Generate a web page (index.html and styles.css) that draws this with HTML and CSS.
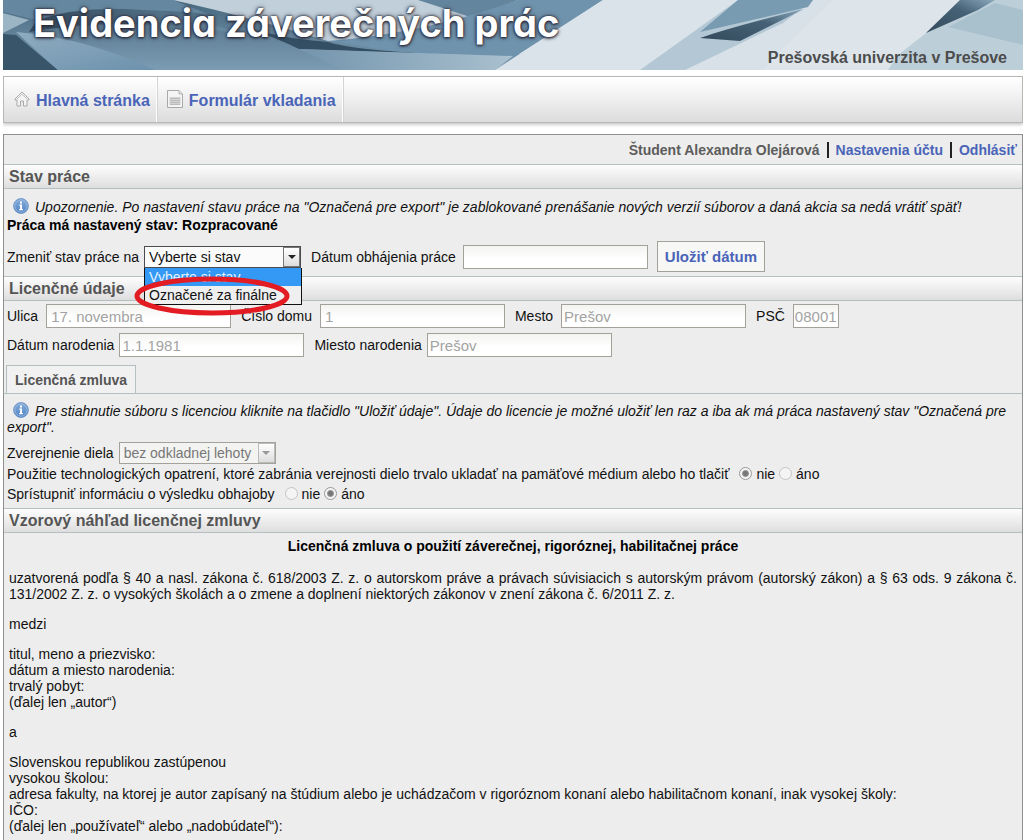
FILE: index.html
```html
<!DOCTYPE html>
<html lang="sk">
<head>
<meta charset="utf-8">
<title>Evidencia záverečných prác</title>
<link rel="stylesheet" href="styles.css">
</head>
<body>
<svg class="defs" width="0" height="0" aria-hidden="true">
  <defs>
    <linearGradient id="info-fill" x1="0" y1="0" x2="0" y2="1"><stop offset="0" stop-color="#86acd9"/><stop offset="1" stop-color="#5185c6"/></linearGradient>
    <symbol id="info" viewBox="0 0 16 16">
      <circle cx="8" cy="8" r="7.4" fill="url(#info-fill)" stroke="#5b87bd" stroke-width=".8"/>
      <circle cx="8" cy="8" r="6.2" fill="none" stroke="#a8c4e6" stroke-width=".7"/>
      <path d="M7 3.4h2v2H7zM6.2 6.4H9v4.6h.9v1.2H6.2V11h.9V7.600h-.9z" fill="#fff"/>
    </symbol>
  </defs>
</svg>
<header class="banner">
  <svg class="banner-art" viewBox="0 0 1020 70" preserveAspectRatio="none" aria-hidden="true">
    <defs>
      <linearGradient id="g1" x1="0" y1="0" x2="0" y2="1"><stop offset="0" stop-color="#47697f"/><stop offset="1" stop-color="#7c9cb4"/></linearGradient>
      <linearGradient id="g2" x1="0" y1="0" x2="1" y2="1"><stop offset="0" stop-color="#8facc0"/><stop offset="1" stop-color="#6d92ad"/></linearGradient>
      <linearGradient id="g3" x1="0" y1="0" x2="1" y2="0"><stop offset="0" stop-color="#31485a"/><stop offset=".5" stop-color="#4d6c82"/><stop offset="1" stop-color="#7194ab"/></linearGradient>
      <linearGradient id="g4" x1="0" y1="0" x2="1" y2="0"><stop offset="0" stop-color="#7495ad"/><stop offset="1" stop-color="#a9c0cf"/></linearGradient>
      <linearGradient id="g5" x1="0" y1="1" x2="1" y2="0"><stop offset="0" stop-color="#334a5b"/><stop offset=".6" stop-color="#466176"/><stop offset="1" stop-color="#8aa8bb"/></linearGradient>
    </defs>
    <rect width="1020" height="70" fill="#d8e1e8"/>
    <path d="M0 0H180L330 40L520 54L495 70H0Z" fill="url(#g1)"/>
    <path d="M0 0H34L170 0L205 14Q110 4 34 20L0 12Z" fill="#6588a0"/>
    <path d="M34 20Q90 2 165 13L250 36Q130 14 26 32Z" fill="url(#g3)"/>
    <path d="M0 13L26 20L0 33Z" fill="#9bb5c5"/>
    <path d="M0 34L13 35L55 70H0Z" fill="#38556a"/>
    <path d="M13 32Q80 37 152 70H55Z" fill="url(#g2)"/>
    <path d="M170 0H432L487 0L440 38Q380 44 325 41Q250 18 170 0Z" fill="#c0cfd9"/>
    <path d="M415 0H515L470 18Q440 8 415 0Z" fill="#63859d"/>
    <path d="M325 41Q420 34 515 0H600L510 58L495 66Q420 56 325 41Z" fill="#6f93ad"/>
    <path d="M220 20Q270 38 325 42Q350 50 432 54L296 49Q265 34 220 20Z" fill="#344f63"/>
    <path d="M296 49L510 56L492 70H340Z" fill="url(#g4)"/>
    <path d="M600 0L492 70H650L755 0Z" fill="#dae3e9"/>
    <path d="M735 0L637 70H682L780 23L810 0Z" fill="#b3c7d4"/>
    <path d="M735 0L697 32L805 7L810 0Z" fill="#799bb2"/>
    <path d="M697 38Q725 28 801 9L737 41Z" fill="url(#g5)"/>
    <path d="M830 0L780 48L760 70H905L960 0Z" fill="#dde5eb"/>
    <path d="M957 0L923 33L895 55L885 70H1020V0Z" fill="#bccfd9"/>
    <path d="M957 0L923 33L975 10L992 0Z" fill="url(#g5)"/>
    <path d="M992 3L1020 10V45L945 27Z" fill="#a9c1cd"/>
  </svg>
  <h1 class="banner-title">Evidencia záverečných prác</h1>
  <p class="banner-school">Prešovská univerzita v Prešove</p>
</header>

<nav class="menu">
  <a class="menu-item" href="#"><svg class="menu-icon" viewBox="0 0 16 16" aria-hidden="true"><path d="M1 8L8 1L15 8V9H13V15H9.500V10H6.500V15H3V9H1Z" fill="#f4f4f4" stroke="#a9a9a9"/><path d="M3 8L8 3.200L13 8" fill="none" stroke="#c4c4c4"/></svg>Hlavná stránka</a>
  <a class="menu-item" href="#"><svg class="menu-icon form-icon" viewBox="0 0 16 18" aria-hidden="true"><path d="M.5 .5H12L15.500 4V17.500H.5Z" fill="#f4f4f4" stroke="#a9a9a9"/><path d="M12 .5V4H15.500" fill="#ddd" stroke="#b5b5b5"/><path d="M2.500 7H13.500V15H2.500Z" fill="#d2d2d2"/><path d="M3 8.500H13M3 10.500H13M3 12.500H13M3 14.500H13" stroke="#bdbdbd"/></svg>Formulár vkladania</a>
</nav>

<main class="panel">
  <div class="user"><span class="user-name">Študent Alexandra Olejárová</span><span class="bar"></span><a href="#">Nastavenia účtu</a><span class="bar"></span><a href="#">Odhlásiť</a></div>

  <h2 class="section">Stav práce</h2>
  <div class="block">
    <p class="note"><svg class="info" aria-hidden="true"><use href="#info"/></svg>Upozornenie. Po nastavení stavu práce na "Označená pre export" je zablokované prenášanie nových verzií súborov a daná akcia sa nedá vrátiť späť!</p>
    <p class="state">Práca má nastavený stav: Rozpracované</p>
    <form class="row state-row">
      <label for="state">Zmeniť stav práce na</label>
      <span class="pick">
        <select class="select" id="state"><option>Vyberte si stav</option><option>Označené za finálne</option></select>
        <span class="arrow"></span>
        <span class="drop"><span class="opt opt-on">Vyberte si stav</span><span class="opt">Označené za finálne</span></span>
        <svg class="ring" viewBox="0 0 156 42" aria-hidden="true"><ellipse cx="78" cy="21" rx="75" ry="17" fill="none" stroke="#e31b23" stroke-width="5"/></svg>
      </span>
      <label class="next" for="defence">Dátum obhájenia práce</label>
      <input class="field defence" id="defence" type="text">
      <button class="save" type="button">Uložiť dátum</button>
    </form>
  </div>

  <h2 class="section">Licenčné údaje</h2>
  <form class="address">
    <div class="row street-row">
      <label for="street">Ulica</label><input class="field" id="street" value="17. novembra" disabled>
      <label class="next" for="house">Číslo domu</label><input class="field" id="house" value="1" disabled>
      <label class="next" for="city">Mesto</label><input class="field tight" id="city" value="Prešov" disabled>
      <label class="next" for="zip">PSČ</label><input class="field zip" id="zip" value="08001" disabled>
    </div>
    <div class="row">
      <label for="born">Dátum narodenia</label><input class="field tight" id="born" value="1.1.1981" disabled>
      <label class="next" for="place">Miesto narodenia</label><input class="field tight" id="place" value="Prešov" disabled>
    </div>
  </form>
  <div class="tabs"><button class="tab" type="button">Licenčná zmluva</button></div>
  <form class="licence">
    <p class="note"><svg class="info" aria-hidden="true"><use href="#info"/></svg>Pre stiahnutie súboru s licenciou kliknite na tlačidlo "Uložiť údaje". Údaje do licencie je možné uložiť len raz a iba ak má práca nastavený stav "Označená pre export".</p>
    <div class="row publish">
      <label for="publish">Zverejnenie diela</label>
      <span class="pick pick-off"><select class="select" id="publish" disabled><option>bez odkladnej lehoty</option></select><span class="arrow"></span></span>
    </div>
    <div class="choice"><span class="ask">Použitie technologických opatrení, ktoré zabránia verejnosti dielo trvalo ukladať na pamäťové médium alebo ho tlačiť</span>
      <label class="opt-label"><input class="radio" type="radio" name="tech" checked disabled>nie</label><label class="opt-label"><input class="radio" type="radio" name="tech" disabled>áno</label></div>
    <div class="choice"><span class="ask">Sprístupniť informáciu o výsledku obhajoby</span>
      <label class="opt-label"><input class="radio" type="radio" name="result" disabled>nie</label><label class="opt-label"><input class="radio" type="radio" name="result" checked disabled>áno</label></div>
  </form>

  <h2 class="section">Vzorový náhľad licenčnej zmluvy</h2>
  <article class="contract">
    <h3>Licenčná zmluva o použití záverečnej, rigoróznej, habilitačnej práce</h3>
    <p class="intro">uzatvorená podľa § 40 a nasl. zákona č. 618/2003 Z. z. o autorskom práve a právach súvisiacich s autorským právom (autorský zákon) a § 63 ods. 9 zákona č. 131/2002 Z. z. o vysokých školách a o zmene a doplnení niektorých zákonov v znení zákona č. 6/2011 Z. z.</p>
    <p>medzi</p>
    <p>titul, meno a priezvisko:<br>dátum a miesto narodenia:<br>trvalý pobyt:<br>(ďalej len „autor“)</p>
    <p>a</p>
    <p>Slovenskou republikou zastúpenou<br>vysokou školou:<br>adresa fakulty, na ktorej je autor zapísaný na štúdium alebo je uchádzačom v rigoróznom konaní alebo habilitačnom konaní, inak vysokej školy:<br>IČO:<br>(ďalej len „používateľ“ alebo „nadobúdateľ“):</p>
  </article>
</main>
</body>
</html>
```

FILE: styles.css
```css
* { box-sizing: border-box; }
body {
  margin: 0 1px 0 3px;
  background: #fff;
  color: #111;
  font: 14px/16px "Liberation Sans", Arial, sans-serif;
}
h1, h2, h3, p { margin: 0; }
a { color: #4a64b8; text-decoration: none; }
button, input, select { font: inherit; }
.defs { position: absolute; }

.banner {
  position: relative;
  display: flex;
  justify-content: space-between;
  align-items: flex-start;
  height: 70px;
  padding: 0 16px 0 30px;
}
.banner-art { position: absolute; inset: 0; width: 100%; height: 100%; }
.banner-title {
  position: relative;
  color: #fff;
  font: bold 38px/46px Inter, "Open Sans", sans-serif;
  font-feature-settings: "cv11";
  text-shadow: 0 0 2px #223, 0 1px 3px #223, 0 0 5px #445;
  white-space: nowrap;
}
.banner-school {
  position: relative;
  align-self: flex-end;
  padding-bottom: 3px;
  color: #4c4c4c;
  font-size: 16px;
  font-weight: bold;
  line-height: 18px;
}

.menu {
  display: flex;
  height: 47px;
  margin-top: 6px;
  border: 1px solid #b9b7b2;
  background: linear-gradient(#fff, #f2f2f2 40%, #dcdcdc);
  box-shadow: 0 2px 3px #ccc;
}
.menu-item {
  display: flex;
  align-items: center;
  gap: 6px;
  padding: 2px 6px 0 10px;
  border-right: 1px solid #fff;
  box-shadow: 1px 0 #d3d3d3;
  font-size: 16px;
  font-weight: bold;
}
.menu-icon { width: 16px; height: 16px; margin-bottom: 4px; }
.form-icon { height: 18px; }

.panel {
  margin-top: 11px;
  border: 1px solid #8f8f8f;
  border-bottom: 0;
  background: #ededed;
}
.user {
  display: flex;
  justify-content: flex-end;
  align-items: center;
  height: 29px;
  padding-right: 5px;
  font-weight: bold;
}
.user-name { color: #5c5c5c; }
.bar { width: 2px; height: 16px; margin: 0 7px; background: #222; }

.section {
  height: 25px;
  padding-left: 5px;
  border: solid #b4bfc1;
  border-width: 1px 0;
  background: linear-gradient(#fdfdfd, #dedede);
  color: #555;
  font-size: 16px;
  line-height: 24px;
}
.block { padding: 9px 3px 4px; }
.note { font-style: italic; }
.info { width: 16px; height: 16px; margin: 0 6px 0 6px; vertical-align: -2px; }
.state { padding-top: 2px; color: #000; font-weight: bold; }
.row { display: flex; align-items: center; white-space: nowrap; }
.state-row { margin-top: 8px; }
.row label { margin-right: 5px; }
.row .next { margin-left: 10px; }
.street-row label { margin-right: 8px; }
.field {
  width: 185px;
  height: 24px;
  padding: 0 4px;
  border: 1px solid #a3a19a;
  border-radius: 0;
  background: linear-gradient(#f3f3f1, #fff 60%);
  font-size: 15px;
}
.field:disabled { color: #a3a3a3; }
.tight { padding: 0 2px; }
.zip { width: 46px; padding: 0 1px; }
.defence { margin-left: 2px; }
.save {
  height: 31px;
  margin-left: 9px;
  padding: 0 7px;
  border: 1px solid #a3a19a;
  background: #f7f7f6;
  color: #4a64b8;
  font-size: 15px;
  font-weight: bold;
}

.pick { position: relative; width: 157px; height: 22px; }
.select {
  width: 100%;
  height: 100%;
  padding: 0 4px;
  appearance: none;
  border: 1px solid #4c4c4c;
  border-radius: 0;
  background: #fbfbfb;
  color: #111;
}
.arrow {
  position: absolute;
  inset: 1px 1px 1px auto;
  display: flex;
  align-items: center;
  justify-content: center;
  width: 17px;
  border: 1px solid #777;
  background: linear-gradient(#fff, #ddd);
  pointer-events: none;
}
.arrow::after { content: ""; border: solid transparent; border-width: 4px 4px 0; border-top-color: #222; }
.pick-off .select { border-color: #a3a19a; background: #f3f3f1; color: #777; opacity: 1; }
.pick-off .arrow { border-color: #bbb; }
.pick-off .arrow::after { border-top-color: #999; }
.drop {
  position: absolute;
  z-index: 2;
  top: 22px;
  left: 0;
  width: 158px;
  border: solid #111;
  border-width: 0 1px 1px;
  background: #efefef;
}
.opt { display: block; height: 18px; padding-left: 4px; line-height: 18px; }
.opt-on { background: #3399f5; color: #e6f2ff; }
.ring { position: absolute; z-index: 3; top: 29px; left: -10px; width: 156px; height: 42px; }

.address { display: flex; flex-direction: column; gap: 5px; padding: 3px 3px 0; }
.tabs { display: flex; margin-top: 8px; padding-left: 2px; border-bottom: 1px solid #b4bfc1; }
.tab {
  height: 28px;
  padding: 0 8px;
  border: 1px solid #b4bfc1;
  border-bottom: 0;
  background: #f1f1f1;
  color: #555;
  font-weight: bold;
}
.licence { padding: 8px 3px 4px; }
.publish { margin-top: 7px; }
.choice { display: flex; align-items: center; height: 20px; }
.ask { margin-right: 10px; }
.opt-label { display: flex; align-items: center; margin-right: 4px; }
.radio {
  width: 13px;
  height: 13px;
  margin: 0 4px 2px 0;
  appearance: none;
  border: 1px solid #c4c4c4;
  border-radius: 50%;
  background: #f4f4f4;
}
.radio:checked { border-color: #999; background: radial-gradient(circle, #777 0 2px, #999 3px, #f4f4f4 4px); }

.contract { padding: 5px 5px 8px; }
.contract h3 { color: #000; font-size: 14px; text-align: center; }
.contract p { margin-top: 14px; }
.contract .intro { margin-top: 16px; text-align: justify; }
```
